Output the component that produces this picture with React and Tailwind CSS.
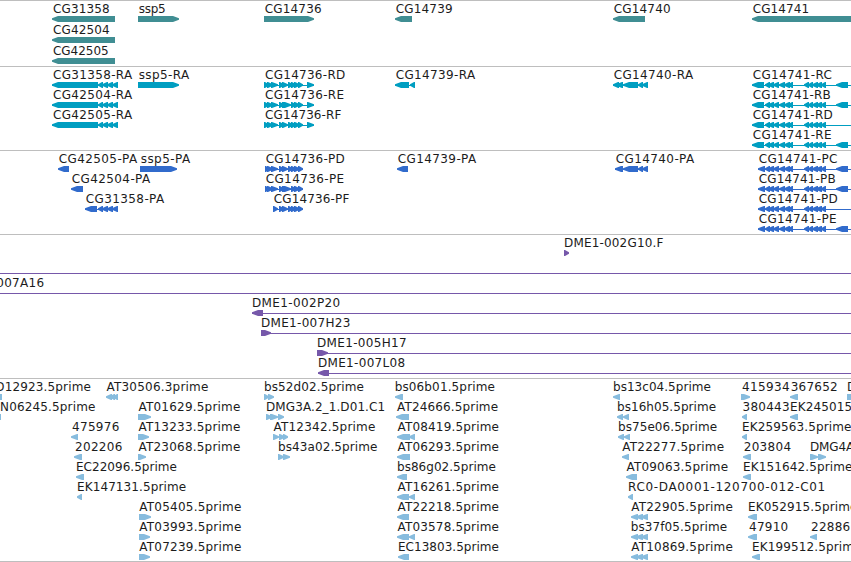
import React from "react";

const FONT = '12px "DejaVu Sans", sans-serif';
const ctx = document.createElement("canvas").getContext("2d");

// Tracking and offset that make a label's ink run from x0 to x1.
function fitLabel(text, x0, x1) {
  ctx.font = FONT;
  const m = ctx.measureText(text);
  const ink = m.actualBoundingBoxRight + m.actualBoundingBoxLeft;
  return {
    left: x0 + m.actualBoundingBoxLeft,
    letterSpacing: (x1 - x0 - ink) / (text.length - 1),
  };
}

// Feature: [label, inkStart, inkEnd, direction, exons, connector end]
const INTRON_TAIL = [[98, 103], [102, 108], [107, 113], [112, 118]];
const EX36 = [[267, 273], [271, 278], [279, 284], [282, 288], [288, 293], [291, 296], [294, 300], [298, 303]];
const EX36E = [[267, 273], [271, 278], [279, 284], [282, 291], [291, 296], [294, 300], [298, 303]];
const EX41 = [[765, 770], [768, 774], [773, 779], [779, 785], [784, 790], [788, 793], [804, 809], [808, 813], [812, 818], [816, 822], [821, 826]];
const EX40 = [[623, 638], [638, 643], [642, 648]];
const TRIPLE = [[631, 638], [636, 643], [641, 648]];

const TRACKS = [
  {
    name: "genes", color: "#408e93", height: "h-[66px]", row: "h-[21px]",
    rows: [
      [
        ["CG31358", 53, 109, "L", [[52, 115]]],
        ["ssp5", 138.7, 165, "R", [[138, 179]]],
        ["CG14736", 264.7, 321, "R", [[264, 314]]],
        ["CG14739", 395.7, 452, "L", [[395, 412]]],
        ["CG14740", 613.7, 670, "L", [[613, 645]]],
        ["CG14741", 752.7, 808.5, "L", [[752, 870]]],
      ],
      [["CG42504", 53, 109, "L", [[52, 115]]]],
      [["CG42505", 53, 108, "L", [[52, 115]]]],
    ],
  },
  {
    name: "transcripts", color: "#009ec1", height: "h-[84px]", row: "h-5",
    rows: [
      [
        ["CG31358-RA", 53, 133, "L", [[52, 98], ...INTRON_TAIL], 118],
        ["ssp5-RA", 138.7, 190, "R", [[138, 179]]],
        ["CG14736-RD", 265, 345, "R", [[264, 269], ...EX36, [307, 314]], 314],
        ["CG14739-RA", 395.7, 476, "L", [[395, 409], [410, 415]], 415],
        ["CG14740-RA", 613.7, 694, "L", [[613, 619], [616, 623], ...EX40], 648],
        ["CG14741-RC", 752.7, 831.5, "L", [[752, 764], ...EX41, [836, 848]], 851],
      ],
      [
        ["CG42504-RA", 53, 133, "L", [[52, 98], ...INTRON_TAIL], 118],
        ["CG14736-RE", 265, 343.5, "R", [[264, 269], ...EX36E, [307, 314]], 314],
        ["CG14741-RB", 752.7, 830.5, "L", [[752, 764], ...EX41, [836, 848]], 851],
      ],
      [
        ["CG42505-RA", 53, 133, "L", [[52, 98], ...INTRON_TAIL], 118],
        ["CG14736-RF", 265, 341.5, "R", [[264, 269], ...EX36, [307, 314]], 314],
        ["CG14741-RD", 752.7, 832.5, "L", [[752, 764], ...EX41], 851],
      ],
      [["CG14741-RE", 752.7, 831, "L", [[752, 764], ...EX41, [836, 848]], 851]],
    ],
  },
  {
    name: "proteins", color: "#316bcc", height: "h-[84px]", row: "h-5",
    rows: [
      [
        ["CG42505-PA", 58.7, 138, "L", [[58, 69]]],
        ["ssp5-PA", 140.7, 191, "R", [[140, 177]]],
        ["CG14736-PD", 265.7, 344.5, "R", [[265, 269], ...EX36], 303],
        ["CG14739-PA", 397.7, 477, "L", [[397, 408]]],
        ["CG14740-PA", 615.7, 695, "L", [[615, 623], ...EX40], 648],
        ["CG14741-PC", 758.7, 837, "L", [[758, 765], ...EX41, [836, 848]], 851],
      ],
      [
        ["CG42504-PA", 71.7, 151, "L", [[71, 83]]],
        ["CG14736-PE", 265.7, 343.5, "R", [[265, 269], ...EX36E], 303],
        ["CG14741-PB", 758.7, 835.5, "L", [[758, 765], ...EX41, [836, 848]], 851],
      ],
      [
        ["CG31358-PA", 85.7, 165, "L", [[85, 97], ...INTRON_TAIL], 118],
        ["CG14736-PF", 273.7, 349.5, "R", [[273, 278], ...EX36.slice(2)], 303],
        ["CG14741-PD", 758.7, 837.5, "L", [[758, 765], ...EX41], 851],
      ],
      [["CG14741-PE", 758.7, 836, "L", [[758, 765], ...EX41, [836, 848]], 851]],
    ],
  },
  {
    name: "clones", color: "#7658aa", height: "h-[144px]", row: "h-5",
    rows: [
      [["DME1-002G10.F", 565, 663.5, "R", [[564, 569]]]],
      [["", 0, 0, "L", [[-20, -10]], 851]],
      [["DME1-007A16", -43.5, 43.5, "L", [[-44, -33]], 851]],
      [["DME1-002P20", 253, 339.5, "L", [[252, 263]], 851]],
      [["DME1-007H23", 262, 349.7, "R", [[261, 271]], 851]],
      [["DME1-005H17", 318, 406, "R", [[317, 328]], 851]],
      [["DME1-007L08", 319, 404.5, "L", [[318, 329]], 851]],
    ],
  },
  {
    name: "ests", color: "#87bcde", height: "h-[183px]", row: "h-5",
    rows: [
      [
        ["LD12923.5prime", -10.5, 90.5, "L", [[-10, 2]]],
        ["AT30506.3prime", 106.5, 208, "L", [[106, 112], [110, 115], [113, 118]]],
        ["bs52d02.5prime", 265, 363.5, "R", [[264, 269], [268, 274]]],
        ["bs06b01.5prime", 395.7, 494.5, "L", [[395, 403]]],
        ["bs13c04.5prime", 614, 710.5, "L", [[613, 620]]],
        ["415934", 742, 789, "R", [[741, 750]]],
        ["367652", 790.7, 837, "L", [[790, 798]]],
        ["DMG", 848, 877, "R", [[847, 857]]],
      ],
      [
        ["N06245.5prime", 1, 95, "L", [[-10, 1]]],
        ["AT01629.5prime", 138.5, 240, "R", [[138, 151]]],
        ["DMG3A.2_1.D01.C1", 267, 384.5, "R", [[266, 272], [270, 278], [278, 284]]],
        ["AT24666.5prime", 397, 497.7, "L", [[396, 409]]],
        ["bs16h05.5prime", 618, 715.7, "L", [[617, 623], [623, 629]]],
        ["380443", 742.5, 789, "L", [[742, 747]]],
        ["EK245015.5prime", 791, 899, "L", [[790, 798]]],
      ],
      [
        ["475976", 72, 118.7, "L", [[71, 78]]],
        ["AT13233.5prime", 138.5, 240, "R", [[138, 149]]],
        ["AT12342.5prime", 273.5, 375, "R", [[273, 279], [279, 285], [283, 288]]],
        ["AT08419.5prime", 397.5, 498.5, "L", [[397, 410], [409, 415]]],
        ["bs75e06.5prime", 619, 716.7, "L", [[618, 624], [624, 630]]],
        ["EK259563.5prime", 743, 851, "L", [[742, 747]]],
      ],
      [
        ["202206", 75, 121.7, "L", [[74, 82]]],
        ["AT23068.5prime", 138.5, 240, "R", [[138, 146]]],
        ["bs43a02.5prime", 279, 377, "R", [[278, 284], [283, 290]]],
        ["AT06293.5prime", 397.5, 498.5, "L", [[397, 410]]],
        ["AT22277.5prime", 622.3, 723.7, "L", [[622, 629]]],
        ["203804", 743.7, 790.5, "L", [[743, 751]]],
        ["DMG4A", 811, 855, "R", [[810, 818], [818, 826]]],
      ],
      [
        ["EC22096.5prime", 77, 176.5, "L", [[76, 84]]],
        ["bs86g02.5prime", 398, 495.5, "L", [[397, 407]]],
        ["AT09063.5prime", 626.5, 727.7, "L", [[626, 637]]],
        ["EK151642.5prime", 744, 852, "L", [[743, 751]]],
      ],
      [
        ["EK147131.5prime", 78, 185.7, "L", [[77, 82]]],
        ["AT16261.5prime", 397.5, 498.5, "L", [[397, 409], [409, 415]]],
        ["RC0-DA0001-120700-012-C01", 629, 824.5, "L", [[628, 633]]],
      ],
      [
        ["AT05405.5prime", 139.3, 241, "R", [[139, 151]]],
        ["AT22218.5prime", 397.5, 498.5, "L", [[397, 409]]],
        ["AT22905.5prime", 631.3, 732.5, "L", TRIPLE],
        ["EK052915.5prime", 749, 857, "L", [[748, 757]]],
      ],
      [
        ["AT03993.5prime", 139.3, 241, "R", [[139, 150]]],
        ["AT03578.5prime", 397.5, 498.5, "L", [[397, 409], [409, 415]]],
        ["bs37f05.5prime", 631.7, 726.7, "L", TRIPLE],
        ["47910", 749, 787.5, "L", [[748, 757]]],
        ["22886", 811, 849.5, "L", [[810, 817]]],
      ],
      [
        ["AT07239.5prime", 139.3, 241, "R", [[139, 150]]],
        ["EC13803.5prime", 399, 498.5, "L", [[398, 409]]],
        ["AT10869.5prime", 631.3, 732.5, "L", TRIPLE],
        ["EK199512.5prime", 753, 861, "L", [[752, 760]]],
      ],
    ],
  },
];

// Arrow-headed exon block, 6px tall, with a blunt tip.
function exonPath([a, b], dir) {
  const w = b - a;
  const h = w > 7 ? 6 : w - 1;
  return dir === "L"
    ? `M${a} 2.2L${a + h} 0H${b}V6H${a + h}L${a} 3.8Z`
    : `M${b} 2.2L${b - h} 0H${a}V6H${b - h}L${b} 3.8Z`;
}

function Label({ text, x0, x1 }) {
  const fit = fitLabel(text, x0, x1);
  return (
    <span
      className="absolute top-px whitespace-pre"
      style={{ left: fit.left, letterSpacing: `${fit.letterSpacing}px` }}
    >
      {text}
    </span>
  );
}

function Row({ features, color, rowClass }) {
  return (
    <div className={`relative shrink-0 ${rowClass}`}>
      <div className="relative h-[15px] text-[12px] leading-[15px] text-[#1c1c1c]">
        {features.map(([text, x0, x1]) =>
          text ? <Label key={text} text={text} x0={x0} x1={x1} /> : null
        )}
      </div>
      <svg className="block" width="851" height="6" viewBox="0 0 851 6" fill={color}>
        {features.map(([text, , , dir, exons, end], i) => (
          <g key={text + i}>
            {end ? <rect x={exons[0][0]} y="3" width={end - exons[0][0]} height="1" /> : null}
            {exons.map((e) => (
              <path key={e[0]} d={exonPath(e, dir)} />
            ))}
          </g>
        ))}
      </svg>
    </div>
  );
}

export default function App() {
  return (
    <main className='flex h-[562px] w-[851px] flex-col overflow-hidden bg-white font-["DejaVu_Sans",sans-serif]'>
      {TRACKS.map((t) => (
        <section
          key={t.name}
          className={`flex shrink-0 flex-col border-t border-[#bebebe] ${t.height}`}
        >
          {t.rows.map((features, i) => (
            <Row key={i} features={features} color={t.color} rowClass={t.row} />
          ))}
        </section>
      ))}
      <div className="h-px shrink-0 bg-[#bebebe]" />
    </main>
  );
}
